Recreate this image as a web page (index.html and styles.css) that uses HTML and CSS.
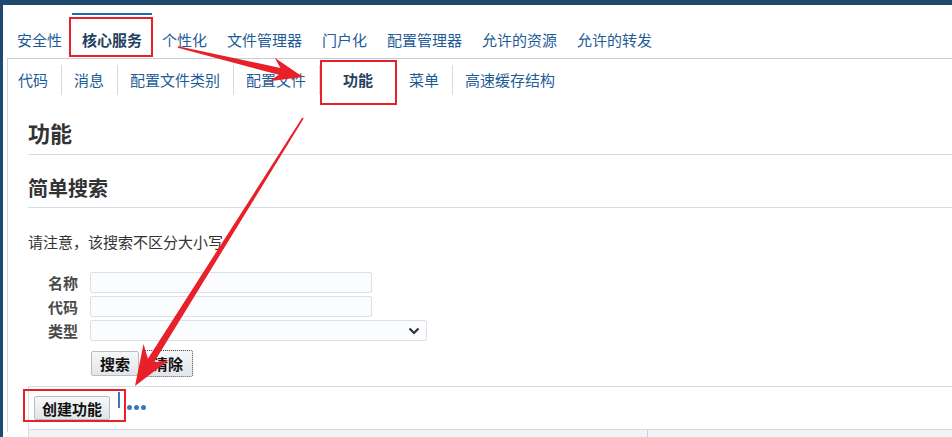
FILE: index.html
```html
<!DOCTYPE html>
<html lang="zh-CN">
<head>
<meta charset="utf-8">
<title>功能</title>
<link rel="stylesheet" href="styles.css">
</head>
<body>
<div class="topbar"></div>
<div class="wrapper">
  <nav class="tabs">
    <a class="tab">安全性</a>
    <a class="tab active">核心服务</a>
    <a class="tab">个性化</a>
    <a class="tab">文件管理器</a>
    <a class="tab">门户化</a>
    <a class="tab">配置管理器</a>
    <a class="tab">允许的资源</a>
    <a class="tab">允许的转发</a>
  </nav>
  <div class="panel">
    <nav class="subtabs">
      <a class="subtab">代码</a>
      <a class="subtab">消息</a>
      <a class="subtab">配置文件类别</a>
      <a class="subtab">配置文件</a>
      <a class="subtab active">功能</a>
      <a class="subtab">菜单</a>
      <a class="subtab">高速缓存结构</a>
    </nav>
    <div class="content">
      <h1 class="title">功能</h1>
      <h2 class="subtitle">简单搜索</h2>
      <p class="note">请注意，该搜索不区分大小写</p>
      <div class="form">
        <label class="label">名称</label>
        <div class="input"></div>
        <label class="label">代码</label>
        <div class="input"></div>
        <label class="label">类型</label>
        <div class="input select">
          <svg width="12" height="8" viewBox="0 0 12 8"><path d="M1.5 1.5 L6 6 L10.5 1.5" fill="none" stroke="#333" stroke-width="2.2"/></svg>
        </div>
      </div>
      <div class="actions">
        <button class="btn">搜索</button>
        <button class="btn focused">清除</button>
      </div>
      <div class="results">
        <div class="toolbar">
          <button class="btn create">创建功能</button>
          <span class="bar"></span>
          <span class="dots"><i></i><i></i><i></i></span>
        </div>
        <div class="thead">
          <div class="th first"></div>
          <div class="th"></div>
        </div>
      </div>
    </div>
  </div>
</div>
<svg class="annot" width="952" height="437" viewBox="0 0 952 437">
  <rect x="70" y="18" width="82" height="38" fill="none" stroke="#e8202a" stroke-width="2"/>
  <rect x="321" y="61" width="75" height="43" fill="none" stroke="#e8202a" stroke-width="2"/>
  <rect x="24" y="390" width="101" height="31" fill="none" stroke="#e8202a" stroke-width="2"/>
  <polygon fill="#e8202a" points="177.8,47.8 278.8,74.8 269.1,81.2 303,77 274.7,57.8 280.4,68.0 178.2,46.2"/>
  <polygon fill="#e8202a" points="303.7,118.4 153.9,362.5 168.9,360.1 135,386 143.5,344.1 147.9,358.7 302.3,117.6"/>
</svg>
</body>
</html>
```
FILE: styles.css
```css
* { box-sizing: border-box; }
html, body { margin: 0; padding: 0; }
body {
  width: 952px;
  height: 437px;
  overflow: hidden;
  position: relative;
  background: #fff;
  font-family: "Microsoft YaHei", "Noto Sans CJK SC", sans-serif;
  color: #333;
}
.topbar { height: 5px; background: #1f4a6f; }
.wrapper {
  border-left: 3px solid #1f4a6f;
  padding-left: 4px;
  height: 432px;
}
.tabs {
  display: flex;
  border-bottom: 1px solid #c5d0db;
  padding-top: 8px;
}
.tab {
  font-size: 15px;
  line-height: 20px;
  color: #1e5c96;
  padding: 15px 10px 8px;
  border-top: 2px solid transparent;
  white-space: nowrap;
}
.tab.active {
  border-top-color: #1b6db3;
  font-weight: bold;
  color: #23425f;
}
.panel {
  border-left: 1px solid #cfd7df;
  height: 373px;
}
.subtabs {
  display: flex;
  padding-top: 6px;
  padding-left: 10px;
}
.subtab {
  font-size: 15px;
  line-height: 30px;
  color: #1e5c96;
  padding: 0 13px 0 12px;
  border-left: 1px solid #d3dae1;
  white-space: nowrap;
}
.subtab:first-child { border-left: none; padding-left: 0; }
.subtab.active {
  padding: 0 23px;
  font-weight: bold;
  color: #23425f;
}
.content { padding-left: 20px; }
.title {
  margin: 22px 0 0;
  font-size: 22px;
  line-height: 30px;
  font-weight: bold;
  color: #333;
  padding-bottom: 7px;
  border-bottom: 1px solid #d5dde4;
}
.subtitle {
  margin: 19px 0 0;
  font-size: 20px;
  line-height: 28px;
  font-weight: bold;
  color: #333;
  padding-bottom: 5px;
  border-bottom: 1px solid #d5dde4;
}
.note {
  margin: 24px 0 0;
  font-size: 15px;
  line-height: 20px;
  color: #333;
}
.form {
  margin-top: 20px;
  display: grid;
  grid-template-columns: 50px auto;
  grid-auto-rows: 21px;
  column-gap: 12px;
  row-gap: 3px;
  justify-content: start;
}
.label {
  font-size: 15px;
  line-height: 21px;
  font-weight: bold;
  color: #4a4a4a;
  text-align: right;
}
.input {
  width: 282px;
  height: 21px;
  border: 1px solid #dbe1e7;
  border-radius: 2px;
  background: #fbfcfd;
}
.select {
  width: 337px;
  display: flex;
  align-items: center;
  justify-content: flex-end;
  padding-right: 6px;
}
.actions {
  margin-top: 10px;
  padding-left: 63px;
  display: flex;
  gap: 4px;
}
.btn {
  font-family: inherit;
  font-size: 15px;
  font-weight: bold;
  color: #111;
  height: 25px;
  line-height: 21px;
  padding: 0 8px;
  border: 1px solid #b5bdc5;
  border-radius: 2px;
  background: linear-gradient(#f6f7f8, #e2e5e8);
}
.btn.focused {
  border: 1px dotted #555;
  padding: 0 9px;
  height: 27px;
  margin-top: -1px;
}
.results {
  margin-top: 9px;
  border-top: 1px solid #d5dde4;
  border-left: 1px solid #d5dde4;
}
.toolbar {
  height: 42px;
  display: flex;
  align-items: flex-start;
  padding-left: 5px;
}
.btn.create {
  margin-top: 9px;
  height: 24px;
  padding: 0 7px;
}
.bar {
  width: 2px;
  height: 16px;
  margin-top: 5px;
  margin-left: 8px;
  background: #3d79b8;
}
.dots {
  display: flex;
  gap: 2px;
  margin-left: 7px;
  margin-top: 18px;
}
.dots i {
  width: 5px;
  height: 5px;
  border-radius: 50%;
  background: #3a78b8;
}
.thead {
  display: flex;
  height: 8px;
  border-top: 1px solid #d3dbe3;
  background: #f1f3f6;
}
.th { flex: 1; }
.th.first { flex: none; width: 619px; border-right: 1px solid #c9d2dc; }
.annot {
  position: absolute;
  left: 0;
  top: 0;
  pointer-events: none;
}
```
